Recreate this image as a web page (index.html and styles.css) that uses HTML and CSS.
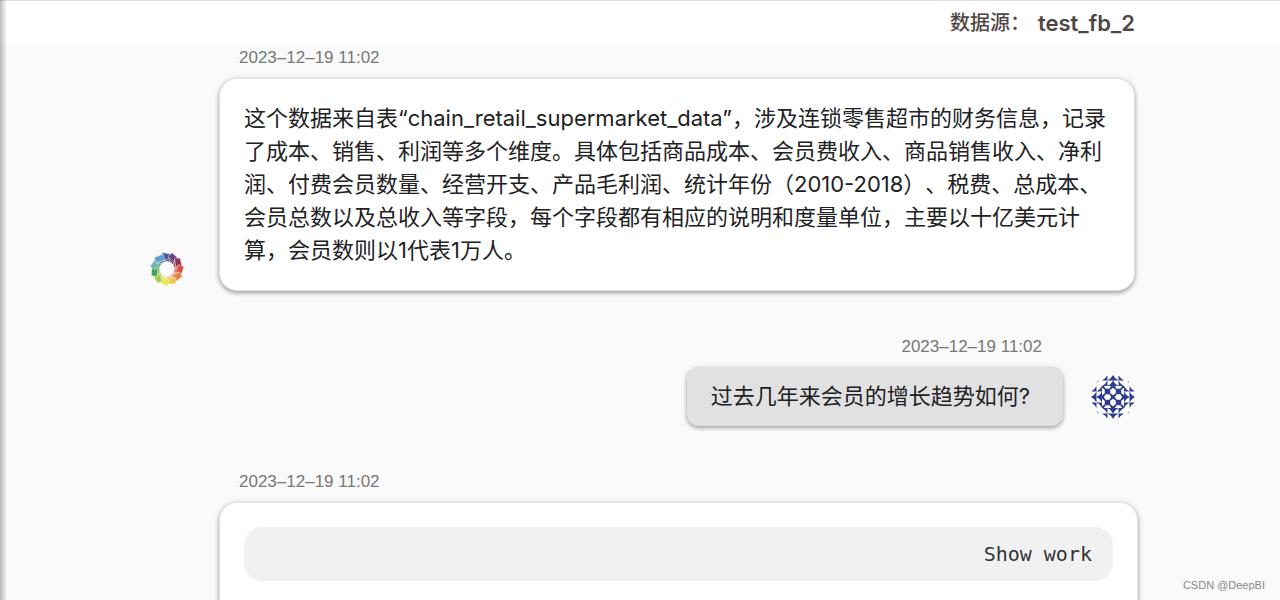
FILE: index.html
```html
<!DOCTYPE html>
<html lang="zh-CN">
<head>
<meta charset="utf-8">
<title>DeepBI</title>
<link rel="stylesheet" href="styles.css">
</head>
<body>
<div class="app">
  <header class="topbar"><span>数据源：</span><span class="source">test_fb_2</span></header>
  <main class="chat">
    <article class="message">
      <time class="time" datetime="2023-12-19T11:02">2023–12–19 11:02</time>
      <div class="row">
        <svg class="logo" viewBox="-17 -17 34 34" role="img" aria-label="DeepBI">
          <defs>
            <path id="petal" d="M-4.500-16.500 5-14.500 2.500-8.500-6-11Z"/>
            <path id="inner" d="M-5-10.500 1.500-9 4.500-6.500-2.500-8.500Z"/>
          </defs>
          <g stroke="#fafafa" stroke-width=".4">
            <g fill="#435a98"><use href="#petal"/><use href="#inner" fill="#2b2355"/></g>
            <g fill="#6d4380" transform="rotate(33)"><use href="#petal"/><use href="#inner" fill="#3a1d47"/></g>
            <g fill="#93304f" transform="rotate(65)"><use href="#petal"/><use href="#inner"/></g>
            <g fill="#dc4c3c" transform="rotate(98)"><use href="#petal"/><use href="#inner"/></g>
            <g fill="#ea8146" transform="rotate(131)"><use href="#petal"/><use href="#inner"/></g>
            <g fill="#f2c044" transform="rotate(164)"><use href="#petal"/><use href="#inner"/></g>
            <g fill="#ece54e" transform="rotate(196)"><use href="#petal"/><use href="#inner"/></g>
            <g fill="#a6cd50" transform="rotate(229)"><use href="#petal"/><use href="#inner"/></g>
            <g fill="#48a34d" transform="rotate(262)"><use href="#petal"/><use href="#inner"/></g>
            <g fill="#6fb5b0" transform="rotate(295)"><use href="#petal"/><use href="#inner" fill="#358b6a"/></g>
            <g fill="#5d9fcd" transform="rotate(327)"><use href="#petal"/><use href="#inner" fill="#2c5d9b"/></g>
          </g>
        </svg>
        <div class="bubble"><p class="text">这个数据来自表“chain_retail_supermarket_data”，涉及连锁零售超市的财务信息，记录了成本、销售、利润等多个维度。具体包括商品成本、会员费收入、商品销售收入、净利润、付费会员数量、经营开支、产品毛利润、统计年份（2010-2018）、税费、总成本、会员总数以及总收入等字段，每个字段都有相应的说明和度量单位，主要以十亿美元计算，会员数则以1代表1万人。</p></div>
      </div>
    </article>
    <article class="message own">
      <time class="time" datetime="2023-12-19T11:02">2023–12–19 11:02</time>
      <div class="row">
        <div class="bubble"><p class="text">过去几年来会员的增长趋势如何?</p></div>
        <svg class="avatar" viewBox="0 0 48 48" role="img" aria-label="用户头像">
          <defs>
            <clipPath id="round"><circle cx="24" cy="24" r="24"/></clipPath>
            <path id="star" d="M0 0H2L4 3H8L10 0H12V2L9 4V8L12 10V12H10L8 9H4L2 12H0V10L3 8V4L0 2Z"/>
            <path id="tri" d="M6 0V6H0Q4 4 6 0Z"/>
            <g id="tile"><use href="#tri"/><use href="#tri" x="6"/><use href="#tri" y="6"/><use href="#tri" x="6" y="6"/></g>
            <g id="quarter">
              <use href="#star" x="12" y="12"/>
              <use href="#tile" x="12"/>
              <use href="#tile" y="12"/>
              <path d="M5 8 8 5V7L7 8Z"/>
            </g>
          </defs>
          <g clip-path="url(#round)" fill="#2f3d8f">
            <rect width="48" height="48" fill="#fff"/>
            <use href="#quarter"/>
            <use href="#quarter" transform="rotate(90 24 24)"/>
            <use href="#quarter" transform="rotate(180 24 24)"/>
            <use href="#quarter" transform="rotate(270 24 24)"/>
          </g>
        </svg>
      </div>
    </article>
    <article class="message wide">
      <time class="time" datetime="2023-12-19T11:02">2023–12–19 11:02</time>
      <div class="row">
        <div class="bubble"><button class="work" type="button">Show work</button></div>
      </div>
    </article>
  </main>
  <span class="watermark">CSDN @DeepBI</span>
</div>
</body>
</html>
```

FILE: styles.css
```css
* { box-sizing: border-box; }
body { margin: 0; background: #fafafa; color: #212124; font-family: Inter, "Noto Sans CJK SC", sans-serif; text-spacing-trim: space-all; }
.app { position: relative; height: 100vh; overflow: hidden; }
.app::before { content: ""; position: absolute; inset: 0 auto 0 0; width: 7px; background: linear-gradient(to right, #0004, #0000); }
.topbar { display: flex; justify-content: flex-end; align-items: center; gap: 8px; height: 45px; padding-right: 145px; border-top: 1px solid #ddd; background: #fff; color: #4f4646; font-size: 20px; font-weight: 500; line-height: 24px; }
.source { font-size: 22px; font-weight: 600; }
.chat { padding: 1px 145px 0 150px; }
.message + .message { margin-top: 44px; }
.time { display: block; padding-left: 89px; color: #777; font-family: "Liberation Sans", sans-serif; font-size: 17px; line-height: 24px; }
.row { display: flex; align-items: flex-end; gap: 35px; margin-top: 8px; }
.logo { flex: none; width: 34px; height: 34px; margin-bottom: 5px; }
.bubble { flex: 1; padding: 23px 24px; border: 1px solid #e2e2e2; border-radius: 18px; background: #fff; box-shadow: 0 2px 4px #0005, 0 0 8px #0001; }
.text { margin: 0; font-size: 22px; line-height: 33px; }
.own .time { padding-right: 93px; text-align: right; }
.own .row { justify-content: flex-end; align-items: center; gap: 28px; }
.own .bubble { flex: none; padding: 13px 33px 13px 24px; border: 0; border-radius: 12px; background: #e1e1e1; }
.avatar { flex: none; width: 44px; height: 44px; }
.wide .row { margin-right: -3px; padding-left: 69px; }
.wide .bubble { padding: 24px 24px 48px; }
.work { display: block; width: 100%; height: 54px; padding: 0 21px; border: 0; border-radius: 18px; background: #f1f1f1; color: #333; font-family: "DejaVu Sans Mono", monospace; font-size: 20px; text-align: right; }
.watermark { position: absolute; right: 15px; bottom: 7px; color: #888; font-family: "Liberation Sans", sans-serif; font-size: 11px; line-height: 16px; }
```
